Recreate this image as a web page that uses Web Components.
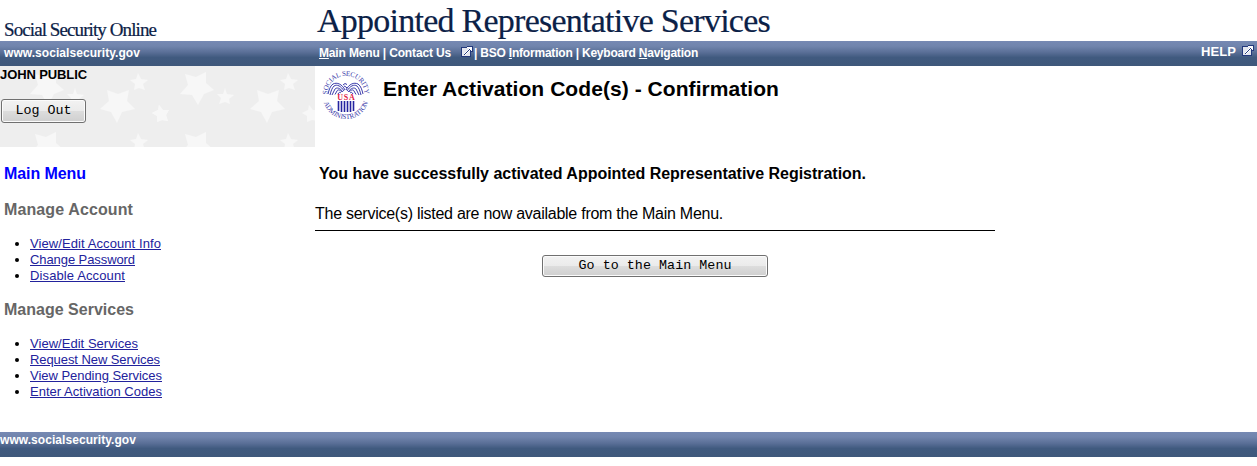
<!DOCTYPE html>
<html lang="en">
<head>
<meta charset="utf-8">
<title>Appointed Representative Services</title>
<style>
    body {
        margin: 0;
        background: #fff;
        color: #000;
        font-family: "Liberation Sans", Arial, sans-serif;
    }
</style>
</head>
<body>
<ssa-page></ssa-page>

<script>
class ShadowElement extends HTMLElement {
    constructor() {
        super();

        const template = document.createElement('template');
        template.innerHTML = this.constructor.TEMPLATE;

        this.shadow = this.attachShadow({ mode: 'open' });
        this.shadow.appendChild(template.content.cloneNode(true));
    }
}

// -- one line of text, tracked so that it fills the given width
class TrackedText extends ShadowElement {

    static TEMPLATE = `
<style>
    :host {
        display: inline-block;
        white-space: nowrap;
        flex: none;
    }
</style>
<slot></slot>
`;

    connectedCallback() {
        const width = Number(this.getAttribute('width'));
        const natural = this.getBoundingClientRect().width;
        if (!width || !natural) {
            return;
        }

        const count = this.textContent.length;
        this.style.letterSpacing = `${(width - natural) / count}px`;
    }
}

class ExternalIcon extends ShadowElement {

    static TEMPLATE = `
<style>
    :host {
        display: block;
        width: 12px;
        height: 12px;
        flex: none;
    }

    svg {
        display: block;
    }
</style>
<svg width="12" height="12" viewBox="0 0 12 12" shape-rendering="crispEdges">
    <path d="M0 1H6V0H12V6H10V11H0Z" fill="#23397c"/>
    <path d="M1 2H9V10H1Z" fill="#e4e7ef"/>
    <path d="M6 1H11V5H10V4H9V3H8V2H6Z" fill="#fff"/>
    <path d="M3 7H4V6H5V5H6V4H7V3H8V4H9V5H8V6H7V7H6V8H5V9H4V8H3Z" fill="#fff"/>
    <path d="M3 8H4V7H5V6H6V5H7V4H8V3H9V4H8V5H7V6H6V7H5V8H4V9H3Z" fill="#23397c"/>
</svg>
`;
}

class SsaSeal extends ShadowElement {

    static TEMPLATE = `
<style>
    :host {
        display: block;
        width: 52px;
        height: 52px;
    }

    svg {
        display: block;
    }

    text {
        font-family: "Liberation Serif", serif;
    }

    .ring {
        font-size: 7px;
        fill: #3838a8;
    }

    .usa {
        font-size: 8px;
        font-weight: bold;
        fill: #e01848;
    }
</style>
<svg width="52" height="52" viewBox="0 0 52 52">
    <defs>
        <path id="top" d="M7.300 24.500A18.700 18.700 0 0 1 44.700 24.500"/>
        <path id="bottom" d="M3 26A23 23 0 0 0 49 26"/>
    </defs>
    <text class="ring"><textPath href="#top" startOffset="0" textLength="58">SOCIAL SECURITY</textPath></text>
    <text class="ring"><textPath href="#bottom" startOffset="6.500" textLength="59">ADMINISTRATION</textPath></text>
    <g fill="none" stroke="#2424a0" stroke-width="0.900">
        <path d="M25 20C22 14 17 12 13 14C10 16 9 20 8 24M24 21C21 16 17 14 14 16C12 18 11 21 10 25M23 22C20 18 17 17 15 19C14 21 13 23 12 25M22 22C20 20 18 19 17 21L15 24.500M21 23C20 22 19 22 18 24"/>
        <path d="M26 20C29 14 34 12 38 14C41 16 42 20 43 24M27 21C30 16 34 14 37 16C39 18 40 21 41 25M28 22C31 18 34 17 36 19C37 21 38 23 39 25M29 22C31 20 33 19 34 21L36 24.500M30 23C31 22 32 22 33 24"/>
        <path d="M23 15L25 13.500L27 14.500M24 16L26 17L27 18"/>
    </g>
    <path d="M18.500 31V41M21.500 31V42M24.500 31V42M27.500 31V42M30.500 31V42M33.500 31V41" stroke="#2424a0" stroke-width="1.600"/>
    <text class="usa" x="17.200" y="30" textLength="17.500">USA</text>
</svg>
`;
}

class StarPanel extends ShadowElement {

    static TEMPLATE = `
<style>
    :host {
        display: block;
        position: relative;
        height: 81px;
        background: #eee;
        overflow: hidden;
    }

    svg {
        position: absolute;
        inset: 0;
    }

    .content {
        position: relative;
    }
</style>
<svg width="315" height="81">
    <defs>
        <pattern id="stars" width="150" height="60" patternUnits="userSpaceOnUse">
            <g fill="#f7f7f7">
                <path d="M35 8L46 11L56 6L56 17L64 24L54 28L48 39L42 29L30 28L38 19Z"/>
                <path d="M138 7L141 13L148 14L143 18L145 24L139 22L134 24L135 18L130 14L136 13Z"/>
                <path d="M75 22L77 28L84 29L79 33L80 38L75 36L69 38L71 32L67 28L73 28Z"/>
                <path d="M107 24L118 28L129 24L127 35L135 43L122 46L117 57L111 46L100 43L109 35Z"/>
                <path d="M9 39L13 44L19 44L16 49L18 55L12 54L7 56L7 50L2 47L8 44Z"/>
            </g>
        </pattern>
    </defs>
    <rect width="315" height="81" fill="url(#stars)"/>
    <path d="M159 39L163 44L169 44L166 49L168 55L162 54L157 56L157 50L152 47L158 44Z" fill="#f7f7f7"/>
</svg>
<div class="content"><slot></slot></div>
`;
}

class GradientBar extends ShadowElement {

    static TEMPLATE = `
<style>
    :host {
        display: flex;
        height: 25px;
        line-height: 25px;
        background: linear-gradient(#7689b3 0, #7185ad 20%, #5a6f97 45%, #405a7f 66%, #3f587b 100%);
        color: #fff;
        font-size: 12px;
        font-weight: bold;
    }
</style>
<slot></slot>
`;
}

class PushButton extends ShadowElement {

    static TEMPLATE = `
<style>
    :host {
        display: block;
    }

    button {
        display: flex;
        justify-content: center;
        align-items: center;
        box-sizing: border-box;
        width: 100%;
        height: 100%;
        margin: 0;
        padding: 0;
        border: 1px solid #707070;
        border-radius: 3px;
        box-shadow: inset 0 0 0 1px #fbfbfb;
        background: linear-gradient(#f2f2f2 0, #ebebeb 48%, #dddddd 50%, #cfcfcf 100%);
        color: #000;
        font: 13.33px/16px "Liberation Mono", "Courier New", monospace;
    }
</style>
<button><slot></slot></button>
`;
}

class MenuGroup extends ShadowElement {

    static TEMPLATE = `
<style>
    :host {
        display: block;
        height: 100px;
    }

    h2 {
        margin: 0 0 17px 4px;
        color: #666;
        font-size: 16px;
        line-height: 18px;
    }

    ul {
        margin: 0;
        padding: 0 0 0 30px;
        font-size: 13px;
        line-height: 16px;
    }

    li {
        height: 16px;
    }

    a {
        color: #22229c;
    }

    a tracked-text {
        text-decoration: underline;
    }
</style>
<h2></h2>
<ul></ul>
`;

    connectedCallback() {
        this.shadow.querySelector('h2').innerHTML =
            `<tracked-text width="${this.getAttribute('width')}">${this.getAttribute('heading')}</tracked-text>`;

        const ul = this.shadow.querySelector('ul');
        ul.innerHTML = '';
        this.getAttribute('items').split('|').forEach(item => {
            const [name, width] = item.split(':');
            const li = document.createElement('li');
            li.innerHTML = `<a href="#"><tracked-text width="${width}">${name}</tracked-text></a>`;
            ul.appendChild(li);
        });
    }
}

class SsaPage extends ShadowElement {

    static TEMPLATE = `
<style>
    :host {
        display: block;
    }

    .row {
        display: grid;
        grid-template-columns: 315px 1fr;
    }

    .titles {
        height: 41px;
        color: #0b2147;
        font-family: "Liberation Serif", "Times New Roman", serif;
        -webkit-text-stroke: 0.2px #0b2147;
    }

    .site {
        padding: 19px 0 0 4px;
        font-size: 19px;
        line-height: 22px;
    }

    .app {
        padding: 2px 0 0 2px;
        font-size: 34px;
        line-height: 38px;
    }

    .domain {
        width: 315px;
        padding-left: 4px;
        box-sizing: border-box;
    }

    .links {
        display: flex;
        flex: 1;
        padding-left: 4px;
        line-height: 24px;
    }

    .links external-icon {
        margin: 5px 1px 0 10px;
    }

    .help {
        display: flex;
        padding-right: 3px;
        font-size: 13px;
        line-height: 21px;
    }

    .help external-icon {
        margin: 4px 0 0 6px;
    }

    .user {
        display: block;
        font-size: 13px;
        font-weight: bold;
        line-height: 17px;
    }

    .logout {
        width: 85px;
        height: 24px;
        margin: 16px 0 0 1px;
    }

    .heading {
        display: flex;
    }

    .heading ssa-seal {
        margin: 4px 0 0 5px;
    }

    h1 {
        margin: 11px 0 0 11px;
        font-size: 21px;
        line-height: 24px;
    }

    .body {
        height: 285px;
    }

    .main-menu {
        margin: 18px 0 18px 4px;
        color: #00f;
        font-size: 16px;
        font-weight: bold;
        line-height: 18px;
    }

    .result {
        width: 680px;
        font-size: 16px;
        line-height: 18px;
    }

    .success {
        margin: 18px 0 22px 4px;
        font-weight: bold;
    }

    .listed {
        padding-bottom: 7px;
        border-bottom: 1px solid #000;
    }

    .go {
        width: 226px;
        height: 22px;
        margin: 24px auto 0;
    }
</style>

<header>
    <div class="row titles">
        <div class="site"><tracked-text width="152">Social Security Online</tracked-text></div>
        <div class="app"><tracked-text width="453">Appointed Representative Services</tracked-text></div>
    </div>
    <gradient-bar>
        <div class="domain"><tracked-text width="136">www.socialsecurity.gov</tracked-text></div>
        <nav class="links">
            <tracked-text width="132"><u>M</u>ain Menu | Contact Us</tracked-text>
            <external-icon></external-icon>
            <tracked-text width="224">| BSO <u>I</u>nformation | Keyboard <u>N</u>avigation</tracked-text>
        </nav>
        <div class="help">
            <tracked-text width="35">HELP</tracked-text>
            <external-icon></external-icon>
        </div>
    </gradient-bar>
</header>

<div class="row">
    <star-panel>
        <div class="user"><tracked-text width="87">JOHN PUBLIC</tracked-text></div>
        <push-button class="logout"><tracked-text width="56">Log Out</tracked-text></push-button>
    </star-panel>
    <div class="heading">
        <ssa-seal></ssa-seal>
        <h1><tracked-text width="396">Enter Activation Code(s) - Confirmation</tracked-text></h1>
    </div>
</div>

<div class="row body">
    <aside>
        <div class="main-menu"><tracked-text width="82">Main Menu</tracked-text></div>
        <menu-group heading="Manage Account" width="129"
            items="View/Edit Account Info:131|Change Password:105|Disable Account:95"></menu-group>
        <menu-group heading="Manage Services" width="130"
            items="View/Edit Services:108|Request New Services:130|View Pending Services:132|Enter Activation Codes:132"></menu-group>
    </aside>
    <main class="result">
        <div class="success"><tracked-text width="547">You have successfully activated Appointed Representative Registration.</tracked-text></div>
        <div class="listed"><tracked-text width="408">The service(s) listed are now available from the Main Menu.</tracked-text></div>
        <push-button class="go"><tracked-text width="153">Go to the Main Menu</tracked-text></push-button>
    </main>
</div>

<gradient-bar style="line-height: 16px"><tracked-text width="136">www.socialsecurity.gov</tracked-text></gradient-bar>
`;
}

customElements.define('tracked-text', TrackedText);
customElements.define('external-icon', ExternalIcon);
customElements.define('ssa-seal', SsaSeal);
customElements.define('star-panel', StarPanel);
customElements.define('gradient-bar', GradientBar);
customElements.define('push-button', PushButton);
customElements.define('menu-group', MenuGroup);
customElements.define('ssa-page', SsaPage);
</script>
</body>
</html>
